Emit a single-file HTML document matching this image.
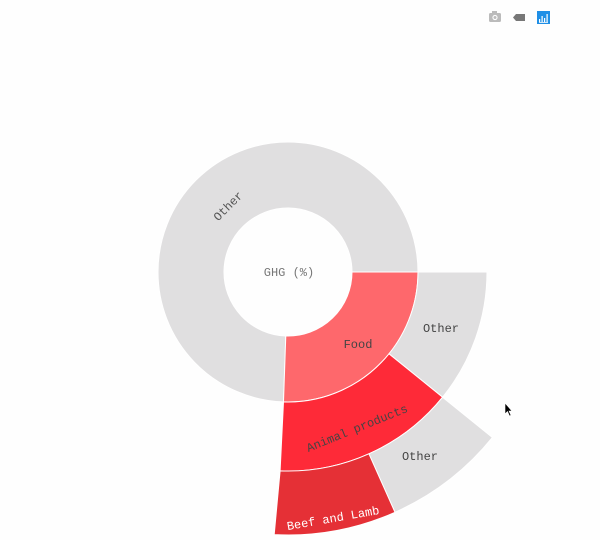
<!DOCTYPE html>
<html><head><meta charset="utf-8"><style>
html,body{margin:0;padding:0;background:#fefefe;width:600px;height:540px;overflow:hidden}
text{font-family:"Liberation Mono",monospace;font-size:12px}
</style></head><body>
<svg width="600" height="540" viewBox="0 0 600 540" xmlns="http://www.w3.org/2000/svg">
<rect width="600" height="540" fill="#fefefe"/>
<!-- ring1 other -->
<path d="M158,272 A130,130 0 1 1 418,272 L352,272 A64,64 0 1 0 285.8,336 L283.5,401.9 A130,130 0 0 1 158,272 Z" fill="#e0dfe0" stroke="#fff" stroke-width="1"/>
<path d="M352,272 L418,272 A130,130 0 0 1 283.5,401.9 L285.8,336 A64,64 0 0 0 352,272 Z" fill="#fe686c" stroke="#fff" stroke-width="1"/>
<!-- ring2 -->
<path d="M418,272 L487,272 A199,199 0 0 1 442.6,397.2 L389,353.8 A130,130 0 0 0 418,272 Z" fill="#e0dfe0" stroke="#fff" stroke-width="1"/>
<path d="M389,353.8 L442.6,397.2 A199,199 0 0 1 280.1,470.9 L283.5,401.9 A130,130 0 0 0 389,353.8 Z" fill="#fe2a38" stroke="#fff" stroke-width="1"/>
<!-- ring3 -->
<path d="M442.6,397.2 L492.4,437.5 A263,263 0 0 1 395,512.3 L368.9,453.8 A199,199 0 0 0 442.6,397.2 Z" fill="#e0dfe0" stroke="#fff" stroke-width="1"/>
<path d="M368.9,453.8 L395,512.3 A263,263 0 0 1 274.2,534.6 L280.1,470.9 A199,199 0 0 0 368.9,453.8 Z" fill="#e53036" stroke="#fff" stroke-width="1"/>
<!-- labels -->
<text x="289" y="276" text-anchor="middle" fill="#777">GHG (%)</text>
<text x="228" y="210" text-anchor="middle" fill="#555" transform="rotate(-45 228 206)">Other</text>
<text x="358" y="348" text-anchor="middle" fill="#444">Food</text>
<text x="441" y="332" text-anchor="middle" fill="#444">Other</text>
<text x="357" y="432" text-anchor="middle" fill="#444" transform="rotate(-22 357 428)">Animal products</text>
<text x="420" y="460" text-anchor="middle" fill="#444">Other</text>
<text x="333" y="522" text-anchor="middle" fill="#fff" transform="rotate(-10 333 518)">Beef and Lamb</text>
<!-- modebar -->
<g fill="#bbb"><rect x="489" y="13" width="12" height="9" rx="1.5"/><rect x="492" y="11" width="5" height="3"/><circle cx="495" cy="17.5" r="2.6" fill="#fefefe"/><circle cx="495" cy="17.5" r="1.5"/></g>
<path d="M513,17.5 L516,14 L525,14 L525,21 L516,21 Z" fill="#777"/>
<rect x="537" y="11" width="13" height="13" fill="#1f8fe6"/>
<g fill="#fff"><rect x="539" y="19" width="1.2" height="3"/><rect x="541.5" y="16" width="1.2" height="6"/><rect x="544" y="18" width="1.2" height="4"/><rect x="546.5" y="14" width="1.2" height="8"/><rect x="539" y="22" width="9" height="0.8"/></g>
<!-- cursor -->
<path d="M505,403 L505,414 L507.5,411.5 L509.5,416 L511,415.3 L509,411 L512,411 Z" fill="#000" stroke="#fff" stroke-width="0.6"/>
</svg>
</body></html>
